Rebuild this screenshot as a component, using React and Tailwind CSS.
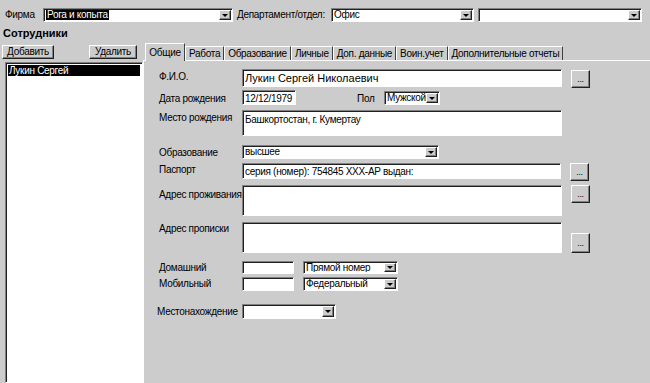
const raised =
  "border border-t-white border-l-white border-r-[#202020] border-b-[#202020] shadow-[inset_-1px_-1px_0_#808080] bg-[#cccccc]";
const sunken =
  "border border-t-[#808080] border-l-[#808080] border-r-white border-b-white shadow-[inset_1px_1px_0_#202020] bg-white";

function Arrow() {
  return (
    <div className={`flex h-full w-[12px] shrink-0 items-center justify-center ${raised}`}>
      <div className="h-0 w-0 border-l-[3px] border-r-[3px] border-t-[3px] border-l-transparent border-r-transparent border-t-black" />
    </div>
  );
}

function Combo({ className, text, selected }) {
  return (
    <div className={`flex items-stretch ${sunken} p-[1px] pl-[2px] ${className}`}>
      <div className="flex flex-1 items-center overflow-hidden whitespace-nowrap leading-none">
        {selected ? <span className="bg-black px-[1px] py-[1px] text-white">{text}</span> : text}
      </div>
      <Arrow />
    </div>
  );
}

function Field({ className, text }) {
  return (
    <div className={`${sunken} whitespace-nowrap px-[2px] pt-[2px] leading-[13px] ${className}`}>{text}</div>
  );
}

function Dots({ className }) {
  return (
    <div className={`ml-[9px] flex h-[18px] w-[19px] shrink-0 items-center justify-center text-[9px] leading-none ${raised} ${className}`}>
      ...
    </div>
  );
}

function Label({ children, className }) {
  return <div className={`w-[83px] shrink-0 whitespace-nowrap leading-[13px] ${className}`}>{children}</div>;
}

const tabs = ["Работа", "Образование", "Личные", "Доп. данные", "Воин.учет", "Дополнительные отчеты"];

export default function App() {
  return (
    <div className="flex h-[383px] w-[650px] flex-col overflow-hidden bg-[#cccccc] font-['Liberation_Sans',Arial,sans-serif] text-[10px] tracking-[-0.3px] text-black">
      {/* Top bar */}
      <div className="flex h-[28px] shrink-0 items-start pt-[8px]">
        <div className="w-[43px] pl-[5px] leading-[14px]">Фирма</div>
        <Combo className="h-[14px] w-[190px]" text="Рога и копыта" selected />
        <div className="ml-[4px] w-[94px] whitespace-nowrap leading-[14px]">Департамент/отдел:</div>
        <Combo className="h-[14px] w-[143px]" text="Офис" />
        <Combo className="ml-[4px] h-[14px] w-[164px]" text="" />
      </div>

      <div className="flex min-h-0 flex-1">
        {/* Left column */}
        <div className="flex w-[143px] shrink-0 flex-col">
          <div className="h-[16px] pl-[3px] text-[11px] font-bold leading-[10px] tracking-normal">Сотрудники</div>
          <div className="mt-[1px] flex h-[14px] items-stretch">
            <div className={`ml-[2px] flex w-[52px] items-center justify-center leading-none ${raised}`}>Добавить</div>
            <div className={`ml-[35px] flex w-[48px] items-center justify-center leading-none ${raised}`}>Удалить</div>
          </div>
          <div className={`mt-[3px] ml-[5px] flex-1 ${sunken} p-[2px]`}>
            <div className="h-[11px] bg-black pl-[1px] leading-[11px] text-white">Лукин Сергей</div>
          </div>
        </div>

        {/* Tabs */}
        <div className="flex min-w-0 flex-1 flex-col pt-[15px]">
          <div className="flex h-[17px] shrink-0 items-end pl-[2px]">
            <div className="relative z-10 -mb-[1px] flex h-[18px] w-[40px] items-start justify-center border-l border-r border-t border-l-white border-t-white border-r-[#404040] bg-[#cccccc] pt-[3px] leading-[12px]">
              Общие
            </div>
            {tabs.map((t) => (
              <div
                key={t}
                className="flex h-[14px] items-center whitespace-nowrap border-l border-r border-t border-l-white border-t-white border-r-[#404040] px-[3px] leading-none"
              >
                {t}
              </div>
            ))}
          </div>

          <div className="flex flex-1 flex-col border-l border-t border-l-white border-t-white pl-[15px]">
            {/* Ф.И.О. */}
            <div className="mt-[8px] flex h-[18px] items-start">
              <Label className="pt-[1px]">Ф.И.О.</Label>
              <Field className="h-[18px] w-[320px] text-[11px] tracking-normal" text="Лукин Сергей Николаевич" />
              <Dots className="mt-[1px]" />
            </div>
            {/* Дата рождения */}
            <div className="mt-[3px] flex h-[15px] items-start">
              <Label className="pt-[2px]">Дата рождения</Label>
              <Field className="h-[15px] w-[54px] !pt-[1px]" text="12/12/1979" />
              <div className="ml-[61px] w-[27px] pt-[2px] leading-[13px]">Пол</div>
              <Combo className="mt-[1px] h-[14px] w-[56px]" text="Мужской" />
            </div>
            {/* Место рождения */}
            <div className="mt-[5px] flex h-[26px] items-start">
              <Label className="pt-[1px]">Место рождения</Label>
              <Field className="h-[26px] w-[320px]" text="Башкортостан, г. Кумертау" />
            </div>
            {/* Образование */}
            <div className="mt-[9px] flex h-[14px] items-start">
              <Label className="pt-[1px]">Образование</Label>
              <Combo className="h-[14px] w-[197px]" text="высшее" />
            </div>
            {/* Паспорт */}
            <div className="mt-[4px] flex h-[16px] items-start">
              <Label className="pt-[0px]">Паспорт</Label>
              <Field className="h-[16px] w-[319px] !pt-[1px]" text="серия (номер): 754845 XXX-AP выдан:" />
              <Dots />
            </div>
            {/* Адрес проживания */}
            <div className="mt-[6px] flex h-[31px] items-start">
              <Label className="pt-[3px]">Адрес проживания</Label>
              <Field className="h-[31px] w-[320px]" text="" />
              <Dots />
            </div>
            {/* Адрес прописки */}
            <div className="mt-[6px] flex h-[31px] items-start">
              <Label className="pt-[0px]">Адрес прописки</Label>
              <Field className="h-[31px] w-[320px]" text="" />
              <Dots className="mt-[11px] h-[20px]" />
            </div>
            {/* Домашний */}
            <div className="mt-[8px] flex h-[13px] items-center">
              <Label className="-mt-[1px]">Домашний</Label>
              <Field className="h-[13px] w-[52px]" text="" />
              <Combo className="ml-[9px] h-[13px] w-[95px]" text="Прямой номер" />
            </div>
            {/* Мобильный */}
            <div className="mt-[3px] flex h-[14px] items-center">
              <Label className="-mt-[1px]">Мобильный</Label>
              <Field className="h-[14px] w-[52px]" text="" />
              <Combo className="ml-[9px] h-[14px] w-[95px]" text="Федеральный" />
            </div>
            {/* Местонахождение */}
            <div className="mt-[13px] -ml-[2px] flex h-[15px] items-center">
              <Label className="w-[85px]">Местонахождение</Label>
              <Combo className="h-[15px] w-[94px]" text="" />
            </div>
          </div>
        </div>
      </div>
    </div>
  );
}
